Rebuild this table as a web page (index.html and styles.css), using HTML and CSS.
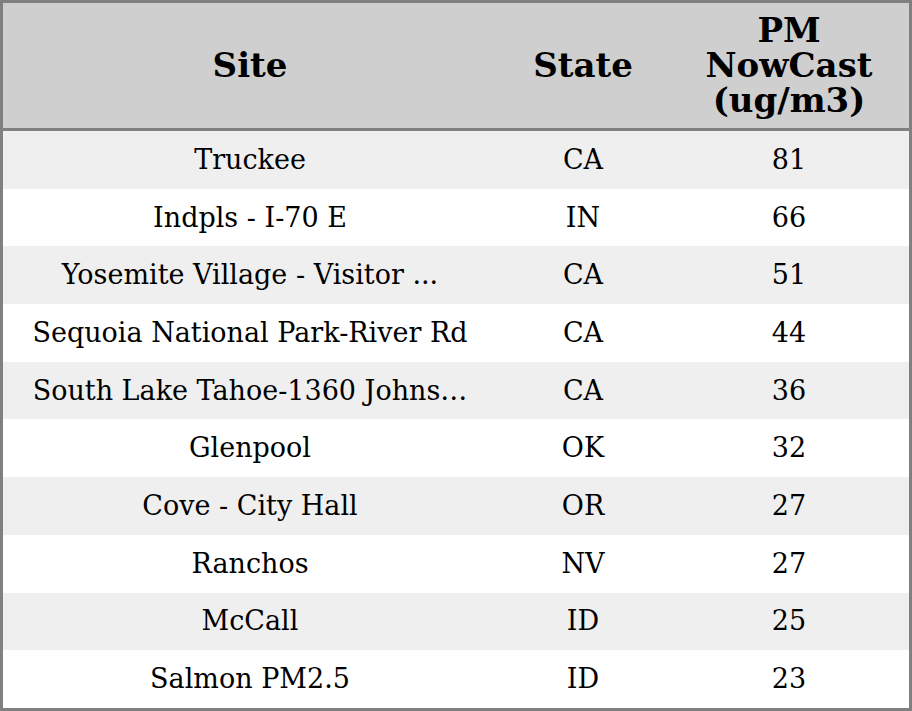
FILE: index.html
```html
<!DOCTYPE html>
<html>
<head>
<meta charset="utf-8">
<link rel="stylesheet" href="styles.css">
</head>
<body>
<table class="grid">
  <colgroup>
    <col class="c-site">
    <col class="c-state">
    <col class="c-pm">
  </colgroup>
  <thead>
    <tr><th>Site</th><th>State</th><th><span class="hl">PM</span><span class="hl">NowCast</span><span class="hl">(ug/m3)</span></th></tr>
  </thead>
  <tbody>
    <tr><td>Truckee</td><td>CA</td><td>81</td></tr>
    <tr><td>Indpls - I-70 E</td><td>IN</td><td>66</td></tr>
    <tr><td>Yosemite Village - Visitor ...</td><td>CA</td><td>51</td></tr>
    <tr><td>Sequoia National Park-River Rd</td><td>CA</td><td>44</td></tr>
    <tr><td>South Lake Tahoe-1360 Johns…</td><td>CA</td><td>36</td></tr>
    <tr><td>Glenpool</td><td>OK</td><td>32</td></tr>
    <tr><td>Cove - City Hall</td><td>OR</td><td>27</td></tr>
    <tr><td>Ranchos</td><td>NV</td><td>27</td></tr>
    <tr><td>McCall</td><td>ID</td><td>25</td></tr>
    <tr><td>Salmon PM2.5</td><td>ID</td><td>23</td></tr>
  </tbody>
</table>
</body>
</html>
```
FILE: styles.css
```css
html, body {
  margin: 0;
  padding: 0;
  background: #ffffff;
}
.grid {
  width: 912px;
  border-collapse: separate;
  border-spacing: 0;
  border: 3px solid #808080;
  font-family: "DejaVu Serif", serif;
  color: #000;
  table-layout: fixed;
}
.c-site { width: 494px; }
.c-state { width: 172px; }
.c-pm { width: 240px; }
.grid th {
  background: #cfcfcf;
  font-size: 34px;
  line-height: 35px;
  font-weight: bold;
  height: 125px;
  padding: 0;
  text-align: center;
  vertical-align: middle;
  border-bottom: 3px solid #808080;
}
.hl {
  display: block;
  height: 35px;
}
.grid td {
  font-size: 27px;
  line-height: 32px;
  height: 57.7px;
  padding: 0;
  text-align: center;
  vertical-align: middle;
  white-space: nowrap;
}
.grid tbody tr:nth-child(odd) td {
  background: #efefef;
}
```
